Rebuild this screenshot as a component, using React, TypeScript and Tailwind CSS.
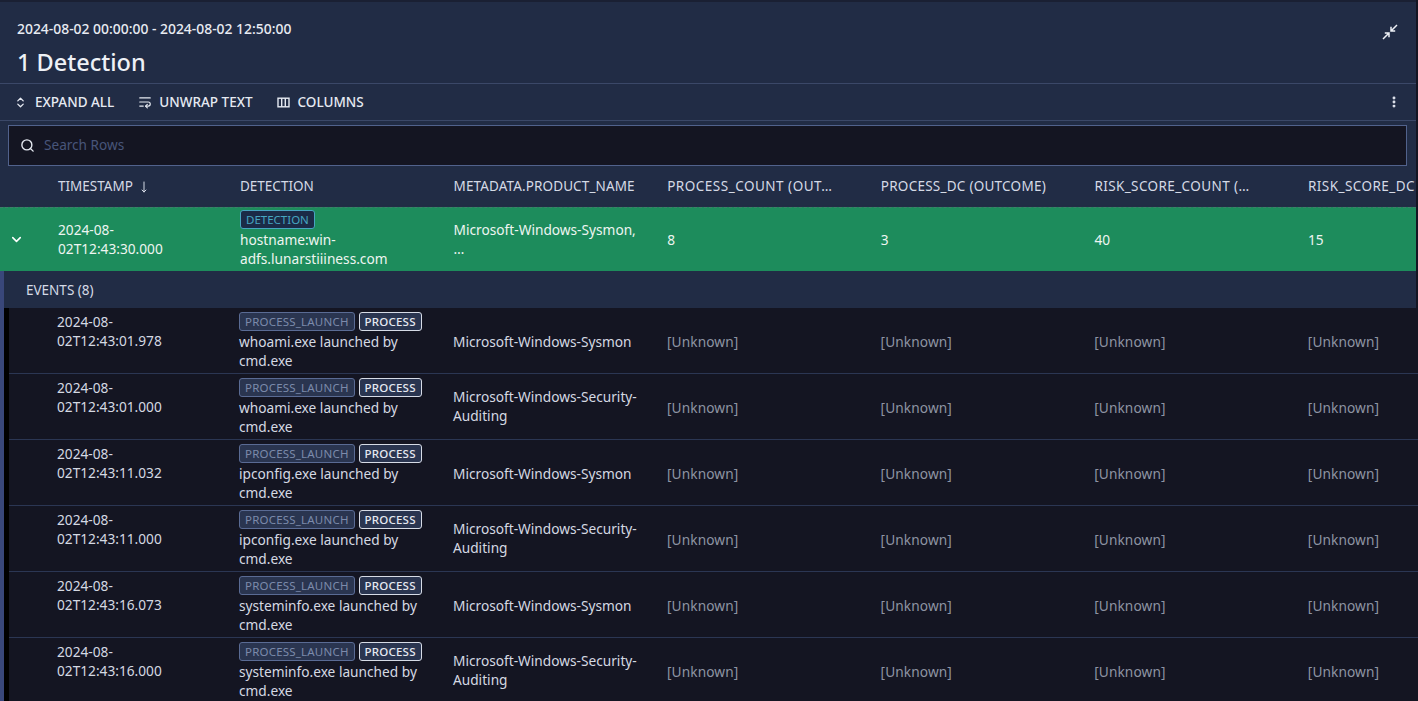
import React from 'react';
import { ChevronDown, ChevronsUpDown, EllipsisVertical, MoveDown, Search, WrapText } from 'lucide-react';

const font = { fontFamily: '"Noto Sans", sans-serif' };

const columns = [
  { label: 'DETECTION', cls: 'w-[213.6px]' },
  { label: 'METADATA.PRODUCT_NAME', cls: 'w-[213.6px] tracking-[0.12px]' },
  { label: 'PROCESS_COUNT (OUT…', cls: 'w-[213.6px] tracking-[0.5px]' },
  { label: 'PROCESS_DC (OUTCOME)', cls: 'w-[213.6px] tracking-[0.25px]' },
  { label: 'RISK_SCORE_COUNT (…', cls: 'w-[213.6px] tracking-[0.4px]' },
  { label: 'RISK_SCORE_DC', cls: 'w-[108px] tracking-[0.45px]' },
];

const events = [
  { ts: '02T12:43:01.978', text: 'whoami.exe launched by', product: ['Microsoft-Windows-Sysmon'] },
  { ts: '02T12:43:01.000', text: 'whoami.exe launched by', product: ['Microsoft-Windows-Security-', 'Auditing'] },
  { ts: '02T12:43:11.032', text: 'ipconfig.exe launched by', product: ['Microsoft-Windows-Sysmon'] },
  { ts: '02T12:43:11.000', text: 'ipconfig.exe launched by', product: ['Microsoft-Windows-Security-', 'Auditing'] },
  { ts: '02T12:43:16.073', text: 'systeminfo.exe launched by', product: ['Microsoft-Windows-Sysmon'] },
  { ts: '02T12:43:16.000', text: 'systeminfo.exe launched by', product: ['Microsoft-Windows-Security-', 'Auditing'] },
];

const ColumnsIcon = () => (
  <svg width="13" height="13" viewBox="0 0 13 13" fill="none" stroke="currentColor" strokeWidth="1.4" className="text-[#e6eaf2]">
    <rect x="1" y="2.2" width="11" height="8.6" />
    <path d="M4.7 2.2v8.6M8.3 2.2v8.6" />
  </svg>
);

const CollapseIcon = () => (
  <svg width="16" height="16" viewBox="0 0 16 16" fill="none" stroke="currentColor" strokeWidth="1.5" className="absolute right-[18px] top-[22px] text-[#eef1f6]">
    <path d="M1 15 7 9M2.8 9H7v4.2M15 1 9 7M9 2.8V7h4.2" />
  </svg>
);

const ToolbarButton = ({ icon, label }: { icon: React.ReactNode; label: string }) => (
  <div className="flex items-center gap-[8px]">
    {icon}
    <span className="text-[13.5px] font-medium text-[#e6eaf2]">{label}</span>
  </div>
);

const EventRow = ({ ts, text, product }: (typeof events)[number]) => (
  <div className="flex h-[66px] shrink-0 border-b border-[#2b3653] text-[13.7px] leading-[19px] text-[#d5d9e2]">
    <div className="w-[48px] shrink-0" />
    <div className="flex w-[182px] shrink-0 flex-col pt-[4px]">
      <span>2024-08-</span>
      <span>{ts}</span>
    </div>
    <div className="flex w-[214px] shrink-0 flex-col pt-[4px]">
      <div className="flex gap-[4px]">
        <span className="flex h-[19px] items-center rounded-[3px] border border-[#5a6b94] bg-[#2a3550] px-[5px] text-[11.5px] tracking-[0.2px] text-[#7c8bab]">
          PROCESS_LAUNCH
        </span>
        <span className="flex h-[19px] items-center rounded-[3px] border border-[#d6dbe6] bg-[#2a3550] px-[5px] text-[11.5px] font-medium tracking-[0.2px] text-[#e6eaf2]">
          PROCESS
        </span>
      </div>
      <span className="mt-[1px]">{text}</span>
      <span>cmd.exe</span>
    </div>
    <div className={`flex w-[214px] shrink-0 flex-col justify-center ${product.length > 1 ? 'pb-[2px]' : 'pt-[2px]'}`}>
      {product.map(line => (
        <span key={line}>{line}</span>
      ))}
    </div>
    {[0, 1, 2, 3].map(i => (
      <div key={i} className="flex w-[213.6px] shrink-0 items-center pt-[2px] tracking-[0.1px] text-[#8e94a3]">
        [Unknown]
      </div>
    ))}
  </div>
);

export default function App() {
  return (
    <div className="h-[701px] w-[1418px] overflow-hidden bg-[#141522]" style={font}>
      <div className="flex h-full w-full flex-col overflow-hidden">
        <div className="w-[1416px] shrink-0 overflow-hidden">
          {/* Title */}
          <div className="relative h-[84px] border-b border-[#3b4868] border-t-2 border-t-[#1a2033] bg-[#212c45] px-[17px] pt-[17px]">
            <div className="text-[13.9px] font-medium leading-[20px] text-[#e8ebf2]">2024-08-02 00:00:00 - 2024-08-02 12:50:00</div>
            <div className="mt-[7px] text-[23.5px] font-medium leading-[32px] text-[#eef1f6]">1 Detection</div>
            <CollapseIcon />
          </div>

          {/* Toolbar */}
          <div className="flex h-[37px] items-center justify-between border-b border-[#3b4868] bg-[#212c45] pl-[14px] pr-[15px]">
            <div className="flex items-center gap-[24px]">
              <ToolbarButton icon={<ChevronsUpDown size={13} strokeWidth={2.4} className="text-[#e6eaf2]" />} label="EXPAND ALL" />
              <ToolbarButton icon={<WrapText size={14} strokeWidth={2} className="mr-[-1px] text-[#e6eaf2]" />} label="UNWRAP TEXT" />
              <ToolbarButton icon={<ColumnsIcon />} label="COLUMNS" />
            </div>
            <EllipsisVertical size={14} strokeWidth={3} className="text-[#e6eaf2]" />
          </div>

          {/* Search */}
          <div className="bg-[#212c45] px-[8px] pt-[4px] pr-[9px]">
            <div className="flex h-[41px] items-center gap-[9px] border border-[#51628c] bg-[#141522] px-[11px]">
              <Search size={15} strokeWidth={2.2} className="text-[#e6eaf2]" />
              <span className="text-[13.6px] text-[#48557a]">Search Rows</span>
            </div>
          </div>

          {/* Column headers */}
          <div className="flex h-[41px] items-center bg-[#212c45] pl-[58px] text-[13.5px] text-[#d5dae6]">
            <div className="flex w-[182px] shrink-0 items-center gap-[5px]">
              TIMESTAMP
              <MoveDown size={12} strokeWidth={2} />
            </div>
            {columns.map(col => (
              <div key={col.label} className={`${col.cls} shrink-0 whitespace-nowrap`}>
                {col.label}
              </div>
            ))}
          </div>

          {/* Detection row */}
          <div className="flex h-[64px] border-t border-dashed border-[#3f7f6a] bg-[#1d8c5c] text-[13.7px] leading-[19px] text-[#eef5f1] shadow-[0_1px_2px_rgba(60,70,100,0.8)]">
            <div className="flex w-[58px] shrink-0 items-center pl-[9px]">
              <ChevronDown size={15} strokeWidth={2.5} className="text-white" />
            </div>
            <div className="flex w-[182px] shrink-0 flex-col justify-center pb-[2px]">
              <span>2024-08-</span>
              <span>02T12:43:30.000</span>
            </div>
            <div className="flex w-[213.6px] shrink-0 flex-col pt-[2px]">
              <span className="flex h-[19px] w-fit items-center rounded-[3px] border border-[#46a5c0] bg-[#1b2b47] px-[5px] text-[11.5px] text-[#46a5c0]">
                DETECTION
              </span>
              <span className="mt-[1px]">hostname:win-</span>
              <span>adfs.lunarstiiiness.com</span>
            </div>
            <div className="flex w-[213.6px] shrink-0 flex-col justify-center pb-[2px]">
              <span>Microsoft-Windows-Sysmon,</span>
              <span className="tracking-[1px]">…</span>
            </div>
            {['8', '3', '40', '15'].map((value, i) => (
              <div key={i} className="flex w-[213.6px] shrink-0 items-center">
                {value}
              </div>
            ))}
          </div>

          {/* Events header */}
          <div className="flex h-[37px] items-center border-l-[4px] border-[#39477a] bg-[#212c45] pl-[22px] pt-[2px] text-[13.5px] text-[#d5dae6]">
            EVENTS (8)
          </div>
        </div>

        {/* Event rows */}
        <div className="flex min-h-0 flex-1">
          <div className="w-[4px] shrink-0 bg-[#39477a]" />
          <div className="w-[5px] shrink-0 bg-black" />
          <div className="flex min-w-0 flex-1 flex-col">
            {events.map(ev => (
              <EventRow key={ev.ts} {...ev} />
            ))}
          </div>
        </div>
      </div>
    </div>
  );
}
